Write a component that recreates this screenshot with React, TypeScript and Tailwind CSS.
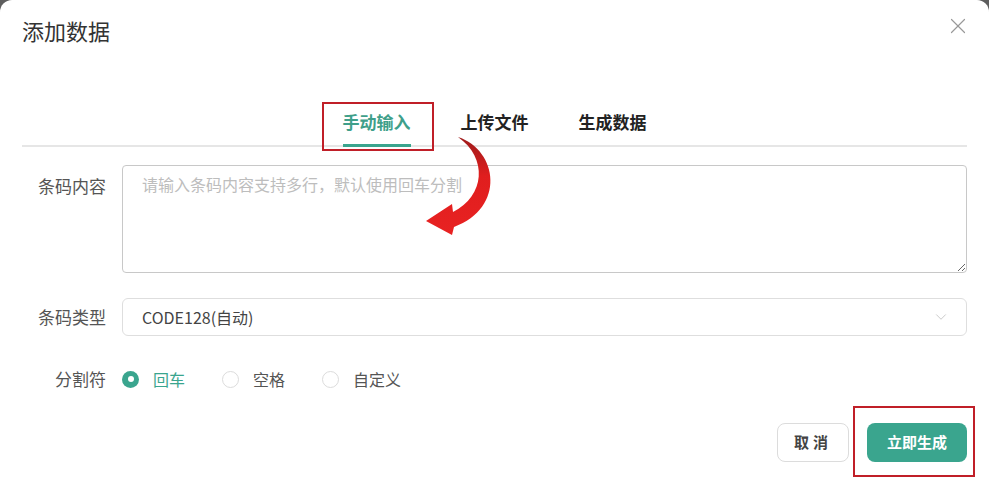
import React from 'react';
import { X, ChevronDown } from 'lucide-react';

const cjk = { fontFamily: '"Noto Sans CJK SC", "Noto Sans", sans-serif' };

function Radio({ label, checked }: { label: string; checked?: boolean }) {
  return (
    <div className="flex items-center gap-[14px]">
      {checked ? (
        <span className="w-[17px] h-[17px] rounded-full bg-[#3aa58e] flex items-center justify-center">
          <span className="w-[6px] h-[6px] rounded-full bg-white" />
        </span>
      ) : (
        <span className="w-[17px] h-[17px] rounded-full border border-[#dcdcdc] bg-white" />
      )}
      <span className={`text-[16px] leading-[24px] ${checked ? 'text-[#3aa58e]' : 'text-[#555]'}`}>{label}</span>
    </div>
  );
}

function CurvedArrow() {
  return (
    <svg className="absolute left-[410px] top-[130px] pointer-events-none" width="100" height="110" viewBox="410 130 100 110">
      <defs>
        <linearGradient id="arrowRed" x1="0" y1="0" x2="0" y2="1">
          <stop offset="0" stopColor="#9e1b1b" />
          <stop offset="0.4" stopColor="#e01e1e" />
          <stop offset="1" stopColor="#e82222" />
        </linearGradient>
      </defs>
      <path
        d="M 458 137 C 498 150 506 208 454 227 L 452 235 L 426 221 L 452 204 L 453 212 C 485 196 488 158 458 137 Z"
        fill="url(#arrowRed)"
      />
    </svg>
  );
}

export default function App() {
  return (
    <div className="w-[989px] h-[500px] bg-[#5e5e5e] overflow-hidden" style={cjk}>
      <div className="relative h-full bg-white rounded-t-[12px] px-[22px]">
        <div className="flex items-center justify-between pt-[15px]">
          <h1 className="text-[22px] leading-[30px] text-[#333] font-normal">添加数据</h1>
          <X size={26} strokeWidth={1.1} className="text-[#999] -mr-[4px] -mt-[8px]" />
        </div>

        <div className="mt-[65px] flex justify-center gap-[50px] border-b-2 border-[#e6e6e6]">
          <div className="relative -mb-[2px] pb-[10px] border-b-[3px] border-[#3aa58e]">
            <span className="block text-[17px] leading-[24px] font-bold text-[#3f9f8a]">手动输入</span>
            <span className="absolute -left-[21px] -top-[8px] w-[112px] h-[49px] border-2 border-[#c01f28]" />
          </div>
          <div className="-mb-[2px] pb-[10px] border-b-[3px] border-transparent">
            <span className="block text-[17px] leading-[24px] font-bold text-[#222]">上传文件</span>
          </div>
          <div className="-mb-[2px] pb-[10px] border-b-[3px] border-transparent">
            <span className="block text-[17px] leading-[24px] font-bold text-[#222]">生成数据</span>
          </div>
        </div>

        <div className="mt-[18px] flex items-start">
          <label className="w-[84px] mr-[16px] text-right text-[17px] leading-[20px] pt-[11px] text-[#555] whitespace-nowrap">条码内容</label>
          <textarea
            readOnly
            placeholder="请输入条码内容支持多行，默认使用回车分割"
            className="flex-1 h-[108px] border border-[#c8c8c8] rounded-[4px] px-[19px] pt-[8px] text-[16px] leading-[20px] placeholder:text-[#bdbdbd] outline-none"
            style={cjk}
          />
        </div>

        <div className="mt-[25px] flex items-center">
          <label className="w-[84px] mr-[16px] text-right text-[17px] text-[#555] whitespace-nowrap">条码类型</label>
          <div className="flex-1 h-[38px] border border-[#dedede] rounded-[6px] flex items-center justify-between pl-[19px] pr-[16px]">
            <span className="text-[16px] text-[#444]">CODE128(自动)</span>
            <ChevronDown size={18} strokeWidth={1.2} className="text-[#c4c4c4]" />
          </div>
        </div>

        <div className="mt-[31px] flex items-center h-[24px]">
          <label className="w-[84px] mr-[16px] text-right text-[17px] text-[#555] whitespace-nowrap">分割符</label>
          <div className="flex items-center gap-[37px]">
            <Radio label="回车" checked />
            <Radio label="空格" />
            <Radio label="自定义" />
          </div>
        </div>

        <div className="mt-[32px] flex justify-end gap-[18px]">
          <button className="w-[72px] h-[39px] border border-[#dcdcdc] rounded-[8px] text-[15px] font-bold text-[#444] bg-white tracking-[4px]">
            取消
          </button>
          <div className="relative">
            <button className="w-[100px] h-[39px] rounded-[8px] bg-[#3aa58e] text-white text-[15px] font-bold">
              立即生成
            </button>
            <span className="absolute -left-[14px] -top-[17px] w-[122px] h-[71px] border-2 border-[#c01f28]" />
          </div>
        </div>

        <CurvedArrow />
      </div>
    </div>
  );
}
